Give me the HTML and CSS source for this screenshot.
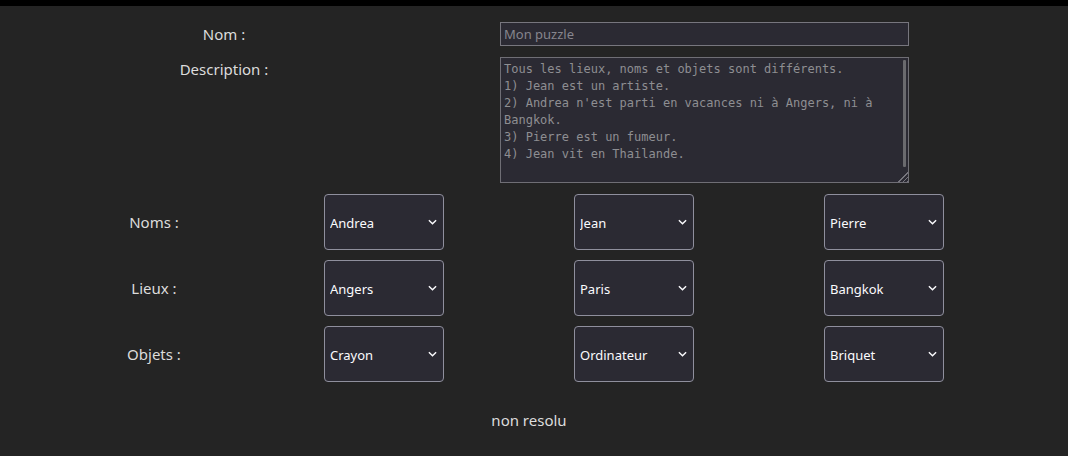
FILE: index.html
```html
<!DOCTYPE html>
<html lang="fr">
<head>
<meta charset="utf-8">
<title>Puzzle</title>
<link rel="stylesheet" href="styles.css">
</head>
<body>
<div class="topbar"></div>
<main class="page">
  <section class="meta">
    <label class="meta-label" for="nom">Nom :</label>
    <input class="meta-input" id="nom" type="text" placeholder="Mon puzzle">
    <label class="meta-label" for="desc">Description :</label>
    <div class="text-wrap">
      <textarea class="meta-text" id="desc" spellcheck="false">Tous les lieux, noms et objets sont différents.
1) Jean est un artiste.
2) Andrea n'est parti en vacances ni à Angers, ni à Bangkok.
3) Pierre est un fumeur.
4) Jean vit en Thailande.

</textarea>
      <span class="thumb"></span>
    </div>
  </section>

  <section class="board">
    <div class="row-label">Noms :</div>
    <div class="pick"><select><option>Andrea</option></select><svg class="chev" viewBox="0 0 10 6"><path d="M1 1l4 4 4-4"/></svg></div>
    <div class="pick"><select><option>Jean</option></select><svg class="chev" viewBox="0 0 10 6"><path d="M1 1l4 4 4-4"/></svg></div>
    <div class="pick"><select><option>Pierre</option></select><svg class="chev" viewBox="0 0 10 6"><path d="M1 1l4 4 4-4"/></svg></div>

    <div class="row-label">Lieux :</div>
    <div class="pick"><select><option>Angers</option></select><svg class="chev" viewBox="0 0 10 6"><path d="M1 1l4 4 4-4"/></svg></div>
    <div class="pick"><select><option>Paris</option></select><svg class="chev" viewBox="0 0 10 6"><path d="M1 1l4 4 4-4"/></svg></div>
    <div class="pick"><select><option>Bangkok</option></select><svg class="chev" viewBox="0 0 10 6"><path d="M1 1l4 4 4-4"/></svg></div>

    <div class="row-label">Objets :</div>
    <div class="pick"><select><option>Crayon</option></select><svg class="chev" viewBox="0 0 10 6"><path d="M1 1l4 4 4-4"/></svg></div>
    <div class="pick"><select><option>Ordinateur</option></select><svg class="chev" viewBox="0 0 10 6"><path d="M1 1l4 4 4-4"/></svg></div>
    <div class="pick"><select><option>Briquet</option></select><svg class="chev" viewBox="0 0 10 6"><path d="M1 1l4 4 4-4"/></svg></div>
  </section>

  <p class="status">non resolu</p>
</main>
</body>
</html>
```

FILE: styles.css
```css
html, body {
  margin: 0;
  padding: 0;
  background: #242424;
}

body {
  font-family: "Noto Sans", "Open Sans", sans-serif;
  color: #dcdcdc;
  font-size: 15px;
}

.topbar {
  height: 6px;
  background: #000;
}

.page {
  padding-top: 16px;
}

.meta {
  display: grid;
  grid-template-columns: 448px 409px;
  column-gap: 52px;
  row-gap: 11px;
  align-items: start;
}

.meta-label {
  text-align: center;
  line-height: 24px;
  color: #dcdcdc;
}

.meta-input {
  box-sizing: border-box;
  width: 409px;
  height: 24px;
  margin: 0;
  padding: 0 3px;
  background: #2b2a33;
  border: 1px solid #77767e;
  border-radius: 0;
  color: #fbfbfe;
  font-family: "Noto Sans", sans-serif;
  font-size: 13px;
  outline: none;
}

.meta-input::placeholder {
  color: #86858d;
}

.text-wrap {
  position: relative;
  width: 409px;
  height: 126px;
}

.meta-text {
  display: block;
  box-sizing: border-box;
  width: 409px;
  height: 126px;
  margin: 0;
  padding: 3px 12px 2px 3px;
  background: #2b2a33;
  border: 1px solid #6f6e75;
  border-radius: 0;
  color: #8e8e92;
  font-family: "DejaVu Sans Mono", "Liberation Mono", monospace;
  font-size: 12px;
  line-height: 17px;
  outline: none;
  resize: both;
  overflow: hidden;
}

.meta-text::-webkit-resizer {
  background:
    linear-gradient(135deg, #2b2a33 58%, transparent 58%),
    repeating-linear-gradient(135deg, transparent 0 2px, #77767e 2px 3px);
  background-color: #2b2a33;
}

.thumb {
  position: absolute;
  top: 3px;
  right: 3px;
  width: 3px;
  height: 107px;
  border-radius: 1px;
  background: #6a6a6e;
  pointer-events: none;
}

.board {
  margin-top: 11px;
  display: grid;
  grid-template-columns: 324px 250px 250px 250px;
  grid-auto-rows: 56px;
  row-gap: 10px;
  align-items: center;
}

.row-label {
  padding-right: 16px;
  text-align: center;
  color: #dcdcdc;
}

.pick {
  position: relative;
  width: 120px;
  height: 56px;
}

.pick select {
  appearance: none;
  -webkit-appearance: none;
  box-sizing: border-box;
  width: 120px;
  height: 56px;
  margin: 0;
  padding: 1px 20px 0 5px;
  background: #2b2a33;
  border: 1px solid #8f8f9d;
  border-radius: 4px;
  color: #fbfbfe;
  font-family: "Noto Sans", sans-serif;
  font-size: 13px;
  outline: none;
}

.chev {
  position: absolute;
  right: 7px;
  top: 25px;
  width: 9px;
  height: 6px;
  pointer-events: none;
}

.chev path {
  fill: none;
  stroke: #fbfbfe;
  stroke-width: 1.6;
}

.status {
  margin: 27px 0 0;
  padding-right: 10px;
  text-align: center;
  font-size: 15px;
  line-height: 22px;
  color: #dcdcdc;
}
```
